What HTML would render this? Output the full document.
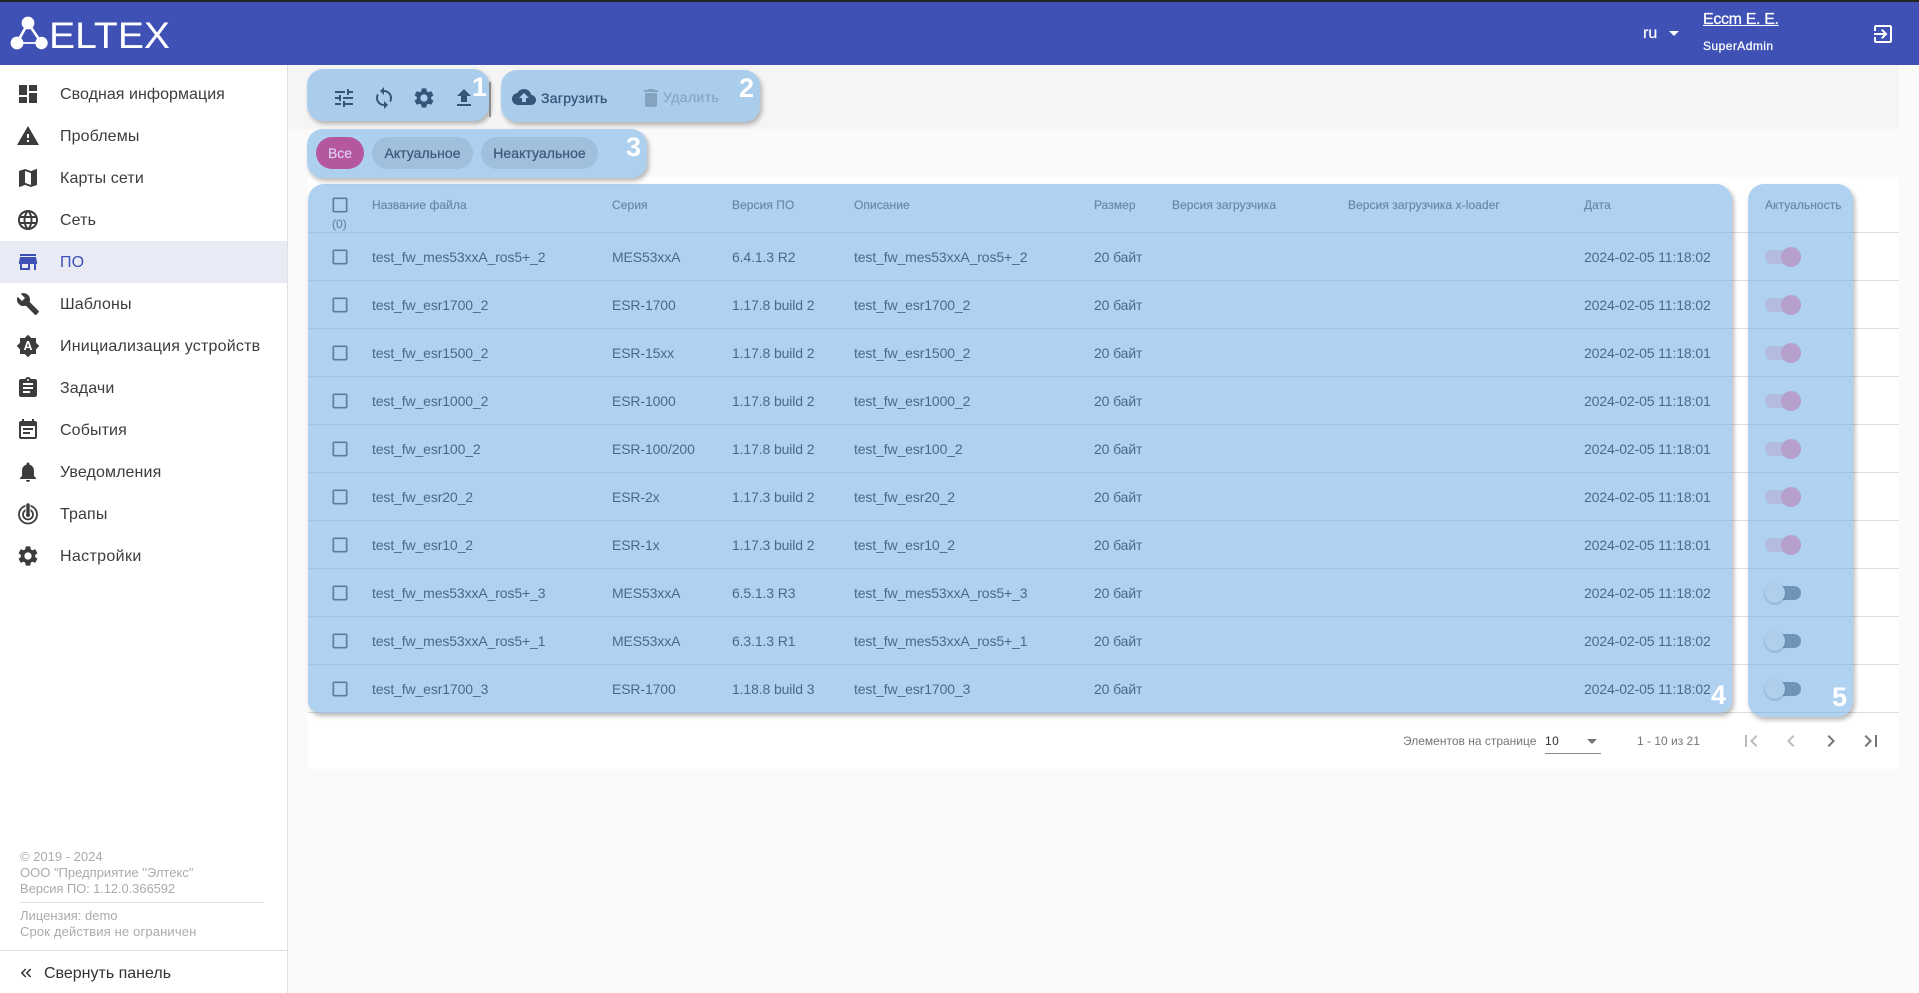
<!DOCTYPE html>
<html lang="ru"><head><meta charset="utf-8"><title>ELTEX</title>
<style>
*{box-sizing:border-box}
html,body{margin:0;padding:0}
body{width:1919px;height:993px;overflow:hidden;background:#fafafa;font-family:"Liberation Sans",sans-serif;color:#333;position:relative}
.a{position:absolute}
svg{display:block}
.t{position:absolute;white-space:nowrap}
#hd{left:0;top:0;width:1919px;height:65px;background:#3f51b5;border-top:2px solid #222}
#sb{left:0;top:65px;width:288px;height:928px;background:#fff;border-right:1px solid #e0e0e0}
.m{position:absolute;left:0;width:287px;height:42px}
.m svg{position:absolute;left:16px;top:9px;fill:#3c3c3c}
.m b{position:absolute;left:60px;top:1px;line-height:42px;font-weight:400;font-size:16px;color:#3c3c3c;letter-spacing:.12px;white-space:nowrap}
.ft{position:absolute;left:20px;font-size:13px;color:#ababab;white-space:nowrap;line-height:16px}
.r{position:absolute;left:308px;width:1591px;height:48px;border-bottom:1px solid #e0e0e0;font-size:14px;color:#2e2e2e;letter-spacing:-.12px}
.r span{position:absolute;top:1px;line-height:47px;white-space:nowrap}
.c1{left:64px}.c2{left:304px}.c3{left:424px}.c4{left:546px}.c5{left:786px}.c6{left:1276px}
.r svg{position:absolute;left:22px;top:14px;fill:#555}
.h{position:absolute;top:198px;font-size:12px;line-height:14px;color:#6f6f6f;white-space:nowrap;-webkit-text-stroke:.2px #6f6f6f;letter-spacing:.06px}
.ov{position:absolute;background:rgba(97,165,225,.5);box-shadow:2px 3px 5px rgba(0,0,0,.28)}
.p{position:absolute;background:#abcdec;box-shadow:2px 3px 5px rgba(0,0,0,.28);border-radius:16px}
.n{position:absolute;color:#fff;font-weight:700;font-size:27px;line-height:28px;z-index:5}
.tg{position:absolute;left:1765px;width:36px;height:14px;border-radius:7px;z-index:4}
.tg i{position:absolute;top:-3px;width:20px;height:20px;border-radius:50%}
.on{background:#b3bcdf}.on i{left:16px;background:#b5a0cc}
.of{background:#7093b8}.of i{left:0;background:#afcfec;box-shadow:0 1px 2px rgba(70,100,140,.45)}
.chip{position:absolute;top:137px;height:32px;border-radius:16px;line-height:32px;text-align:center;font-size:14px;z-index:4;letter-spacing:-.05px}
</style></head><body>

<div class="a" id="hd">
<svg class="a" style="left:0;top:-2px" width="180" height="65" viewBox="0 0 180 65">
<g fill="#fff"><circle cx="28" cy="23" r="6.4"/><circle cx="17" cy="43" r="6.4"/><circle cx="41.5" cy="43" r="6.2"/></g>
<path d="M28 23L17 43M28 23L41.5 43" stroke="#fff" stroke-width="2.6" fill="none"/>
<path d="M17 43H41.5" stroke="#fff" stroke-width="1.8" fill="none"/>
<text x="49" y="48" font-family="'Liberation Sans',sans-serif" font-size="37" fill="#fff" textLength="121" lengthAdjust="spacingAndGlyphs">ELTEX</text>
</svg>
<div class="t" style="left:1643px;top:22px;font-size:16px;line-height:20px;color:#fff;-webkit-text-stroke:.2px #fff">ru</div>
<svg class="a" style="left:1669px;top:29px" width="10" height="5"><path d="M0 0h10L5 5z" fill="#fff"/></svg>
<div class="t" style="left:1703px;top:8px;font-size:16px;line-height:20px;color:#fff;text-decoration:underline;-webkit-text-stroke:.25px #fff;letter-spacing:-.35px">Eccm E. E.</div>
<div class="t" style="left:1703px;top:37px;font-size:12px;line-height:15px;color:#fff;-webkit-text-stroke:.25px #fff;letter-spacing:.45px">SuperAdmin</div>
<svg class="a" style="left:1871px;top:20px" width="24" height="24" viewBox="0 0 24 24"><path fill="#fff" d="M10.09 15.59L11.5 17l5-5-5-5-1.41 1.41L12.67 11H3v2h9.67l-2.58 2.59zM19 3H5c-1.11 0-2 .9-2 2v4h2V5h14v14H5v-4H3v4c0 1.1.89 2 2 2h14c1.1 0 2-.9 2-2V5c0-1.1-.9-2-2-2z"/></svg>
</div>

<div class="a" id="sb">
<div class="m" style="top:8px"><svg width="24" height="24" viewBox="0 0 24 24"><path d="M3 13h8V3H3v10zm0 8h8v-6H3v6zm10 0h8V11h-8v10zm0-18v6h8V3h-8z"/></svg><b style="letter-spacing:.05px">Сводная информация</b></div>
<div class="m" style="top:50px"><svg width="24" height="24" viewBox="0 0 24 24"><path d="M1 21h22L12 2 1 21zm12-3h-2v-2h2v2zm0-4h-2v-4h2v4z"/></svg><b>Проблемы</b></div>
<div class="m" style="top:92px"><svg width="24" height="24" viewBox="0 0 24 24"><path d="M20.5 3l-.16.03L15 5.1 9 3 3.36 4.9c-.21.07-.36.25-.36.48V20.5c0 .28.22.5.5.5l.16-.03L9 18.9l6 2.1 5.64-1.9c.21-.07.36-.25.36-.48V3.5c0-.28-.22-.5-.5-.5zM15 19l-6-2.11V5l6 2.11V19z"/></svg><b>Карты сети</b></div>
<div class="m" style="top:134px"><svg width="24" height="24" viewBox="0 0 24 24"><path d="M11.99 2C6.47 2 2 6.48 2 12s4.47 10 9.99 10C17.52 22 22 17.52 22 12S17.52 2 11.99 2zm6.93 6h-2.95c-.32-1.25-.78-2.45-1.38-3.56 1.84.63 3.37 1.91 4.33 3.56zM12 4.04c.83 1.2 1.48 2.53 1.91 3.96h-3.82c.43-1.43 1.08-2.76 1.91-3.96zM4.26 14C4.1 13.36 4 12.69 4 12s.1-1.36.26-2h3.38c-.08.66-.14 1.32-.14 2 0 .68.06 1.34.14 2H4.26zm.82 2h2.95c.32 1.25.78 2.45 1.38 3.56-1.84-.63-3.37-1.9-4.33-3.56zm2.95-8H5.08c.96-1.66 2.49-2.93 4.33-3.56C8.81 5.55 8.35 6.75 8.03 8zM12 19.96c-.83-1.2-1.48-2.53-1.91-3.96h3.82c-.43 1.43-1.08 2.76-1.91 3.96zM14.34 14H9.66c-.09-.66-.16-1.32-.16-2 0-.68.07-1.35.16-2h4.68c.09.65.16 1.32.16 2 0 .68-.07 1.34-.16 2zm.25 5.56c.6-1.11 1.06-2.31 1.38-3.56h2.95c-.96 1.65-2.49 2.93-4.33 3.56zM16.36 14c.08-.66.14-1.32.14-2 0-.68-.06-1.34-.14-2h3.38c.16.64.26 1.31.26 2s-.1 1.36-.26 2h-3.38z"/></svg><b>Сеть</b></div>
<div class="m" style="top:176px;background:#e8ebf6"><svg width="24" height="24" viewBox="0 0 24 24" style="fill:#3f51b5"><path d="M20 4H4v2h16V4zm1 10v-2l-1-5H4l-1 5v2h1v6h10v-6h4v6h2v-6h1zm-9 4H6v-4h6v4z"/></svg><b style="color:#3f51b5">ПО</b></div>
<div class="m" style="top:218px"><svg width="24" height="24" viewBox="0 0 24 24"><path d="M22.7 19l-9.1-9.1c.9-2.3.4-5-1.5-6.9-2-2-5-2.4-7.4-1.3L9 6 6 9 1.6 4.7C.4 7.1.9 10.1 2.9 12.1c1.9 1.9 4.6 2.4 6.9 1.5l9.1 9.1c.4.4 1 .4 1.4 0l2.3-2.3c.5-.4.5-1.1.1-1.4z"/></svg><b>Шаблоны</b></div>
<div class="m" style="top:260px"><svg width="24" height="24" viewBox="0 0 24 24"><path d="M10.85 12.65h2.3L12 9l-1.15 3.65zM20 8.69V4h-4.69L12 .69 8.69 4H4v4.69L.69 12 4 15.31V20h4.69L12 23.31 15.31 20H20v-4.69L23.31 12 20 8.69zM14.3 16l-.7-2h-3.2l-.7 2H7.8L11 7h2l3.2 9h-1.9z"/></svg><b style="letter-spacing:.2px">Инициализация устройств</b></div>
<div class="m" style="top:302px"><svg width="24" height="24" viewBox="0 0 24 24"><path d="M19 3h-4.18C14.4 1.84 13.3 1 12 1c-1.3 0-2.4.84-2.82 2H5c-1.1 0-2 .9-2 2v14c0 1.1.9 2 2 2h14c1.1 0 2-.9 2-2V5c0-1.1-.9-2-2-2zm-7 0c.55 0 1 .45 1 1s-.45 1-1 1-1-.45-1-1 .45-1 1-1zm2 14H7v-2h7v2zm3-4H7v-2h10v2zm0-4H7V7h10v2z"/></svg><b>Задачи</b></div>
<div class="m" style="top:344px"><svg width="24" height="24" viewBox="0 0 24 24"><path d="M17 10H7v2h10v-2zm2-7h-1V1h-2v2H8V1H6v2H5c-1.11 0-1.99.9-1.99 2L3 19c0 1.1.89 2 2 2h14c1.1 0 2-.9 2-2V5c0-1.1-.9-2-2-2zm0 16H5V8h14v11zm-5-5H7v2h7v-2z"/></svg><b>События</b></div>
<div class="m" style="top:386px"><svg width="24" height="24" viewBox="0 0 24 24"><path d="M12 22c1.1 0 2-.9 2-2h-4c0 1.1.89 2 2 2zm6-6v-5c0-3.07-1.64-5.64-4.5-6.32V4c0-.83-.67-1.5-1.5-1.5s-1.5.67-1.5 1.5v.68C7.63 5.36 6 7.92 6 11v5l-2 2v1h16v-1l-2-2z"/></svg><b>Уведомления</b></div>
<div class="m" style="top:428px"><svg width="24" height="24" viewBox="0 0 24 24" style="fill:none"><circle cx="12" cy="12.5" r="9" stroke="#3c3c3c" stroke-width="1.8"/><circle cx="12" cy="12.5" r="5" stroke="#3c3c3c" stroke-width="1.8"/><circle cx="12" cy="13" r="2" fill="#3c3c3c"/><path d="M12 3v9" stroke="#fff" stroke-width="5"/><path d="M12 3v8" stroke="#3c3c3c" stroke-width="3.4" stroke-linecap="round"/></svg><b>Трапы</b></div>
<div class="m" style="top:470px"><svg width="24" height="24" viewBox="0 0 24 24"><path d="M19.14 12.94c.04-.3.06-.61.06-.94 0-.32-.02-.64-.07-.94l2.03-1.58c.18-.14.23-.41.12-.61l-1.92-3.32c-.12-.22-.37-.29-.59-.22l-2.39.96c-.5-.38-1.03-.7-1.62-.94l-.36-2.54c-.04-.24-.24-.41-.48-.41h-3.84c-.24 0-.43.17-.47.41l-.36 2.54c-.59.24-1.13.57-1.62.94l-2.39-.96c-.22-.08-.47 0-.59.22L2.74 8.87c-.12.21-.08.47.12.61l2.03 1.58c-.05.3-.09.63-.09.94s.02.64.07.94l-2.03 1.58c-.18.14-.23.41-.12.61l1.92 3.32c.12.22.37.29.59.22l2.39-.96c.5.38 1.03.7 1.62.94l.36 2.54c.05.24.24.41.48.41h3.84c.24 0 .44-.17.47-.41l.36-2.54c.59-.24 1.13-.56 1.62-.94l2.39.96c.22.08.47 0 .59-.22l1.92-3.32c.12-.22.07-.47-.12-.61l-2.01-1.58zM12 15.6c-1.98 0-3.6-1.62-3.6-3.6s1.62-3.6 3.6-3.6 3.6 1.62 3.6 3.6-1.62 3.6-3.6 3.6z"/></svg><b style="letter-spacing:.35px">Настройки</b></div>

<div class="ft" style="top:784px">© 2019 - 2024</div>
<div class="ft" style="top:800px">ООО "Предприятие "Элтекс"</div>
<div class="ft" style="top:816px;letter-spacing:-.1px">Версия ПО: 1.12.0.366592</div>
<div class="a" style="left:20px;top:837px;width:244px;height:1px;background:#e0e0e0"></div>
<div class="ft" style="top:843px">Лицензия: demo</div>
<div class="ft" style="top:859px;letter-spacing:.15px">Срок действия не ограничен</div>
<div class="a" style="left:0;top:885px;width:287px;height:1px;background:#e0e0e0"></div>
<svg class="a" style="left:17px;top:899px" width="18" height="18" viewBox="0 0 24 24"><path fill="#333" d="M17.59 18L19 16.59 14.42 12 19 7.41 17.59 6l-6 6zM11 18l1.41-1.41L7.83 12l4.58-4.59L11 6l-6 6z"/></svg>
<div class="t" style="left:44px;top:899px;font-size:16px;line-height:20px;color:#333">Свернуть панель</div>
</div>

<div class="a" style="left:288px;top:65px;width:1611px;height:64px;background:#f5f5f5"></div>
<div class="a" style="left:308px;top:177px;width:1591px;height:592px;background:#fff"></div>

<!-- table header -->
<div class="a" style="left:308px;top:232px;width:1591px;height:1px;background:#e0e0e0"></div>
<svg class="a" style="left:330px;top:195px;fill:#555" width="20" height="20" viewBox="0 0 24 24"><path d="M19 5v14H5V5h14m0-2H5c-1.1 0-2 .9-2 2v14c0 1.1.9 2 2 2h14c1.1 0 2-.9 2-2V5c0-1.1-.9-2-2-2z"/></svg>
<div class="h" style="left:332px;top:217px">(0)</div>
<div class="h" style="left:372px">Название файла</div>
<div class="h" style="left:612px">Серия</div>
<div class="h" style="left:732px">Версия ПО</div>
<div class="h" style="left:854px">Описание</div>
<div class="h" style="left:1094px">Размер</div>
<div class="h" style="left:1172px">Версия загрузчика</div>
<div class="h" style="left:1348px">Версия загрузчика x-loader</div>
<div class="h" style="left:1584px">Дата</div>
<div class="h" style="left:1765px">Актуальность</div>

<!-- rows -->
<div class="r" style="top:233px"><svg width="20" height="20" viewBox="0 0 24 24"><path d="M19 5v14H5V5h14m0-2H5c-1.1 0-2 .9-2 2v14c0 1.1.9 2 2 2h14c1.1 0 2-.9 2-2V5c0-1.1-.9-2-2-2z"/></svg><span class="c1">test_fw_mes53xxA_ros5+_2</span><span class="c2">MES53xxA</span><span class="c3">6.4.1.3 R2</span><span class="c4">test_fw_mes53xxA_ros5+_2</span><span class="c5">20 байт</span><span class="c6">2024-02-05 11:18:02</span></div>
<div class="r" style="top:281px"><svg width="20" height="20" viewBox="0 0 24 24"><path d="M19 5v14H5V5h14m0-2H5c-1.1 0-2 .9-2 2v14c0 1.1.9 2 2 2h14c1.1 0 2-.9 2-2V5c0-1.1-.9-2-2-2z"/></svg><span class="c1">test_fw_esr1700_2</span><span class="c2">ESR-1700</span><span class="c3">1.17.8 build 2</span><span class="c4">test_fw_esr1700_2</span><span class="c5">20 байт</span><span class="c6">2024-02-05 11:18:02</span></div>
<div class="r" style="top:329px"><svg width="20" height="20" viewBox="0 0 24 24"><path d="M19 5v14H5V5h14m0-2H5c-1.1 0-2 .9-2 2v14c0 1.1.9 2 2 2h14c1.1 0 2-.9 2-2V5c0-1.1-.9-2-2-2z"/></svg><span class="c1">test_fw_esr1500_2</span><span class="c2">ESR-15xx</span><span class="c3">1.17.8 build 2</span><span class="c4">test_fw_esr1500_2</span><span class="c5">20 байт</span><span class="c6">2024-02-05 11:18:01</span></div>
<div class="r" style="top:377px"><svg width="20" height="20" viewBox="0 0 24 24"><path d="M19 5v14H5V5h14m0-2H5c-1.1 0-2 .9-2 2v14c0 1.1.9 2 2 2h14c1.1 0 2-.9 2-2V5c0-1.1-.9-2-2-2z"/></svg><span class="c1">test_fw_esr1000_2</span><span class="c2">ESR-1000</span><span class="c3">1.17.8 build 2</span><span class="c4">test_fw_esr1000_2</span><span class="c5">20 байт</span><span class="c6">2024-02-05 11:18:01</span></div>
<div class="r" style="top:425px"><svg width="20" height="20" viewBox="0 0 24 24"><path d="M19 5v14H5V5h14m0-2H5c-1.1 0-2 .9-2 2v14c0 1.1.9 2 2 2h14c1.1 0 2-.9 2-2V5c0-1.1-.9-2-2-2z"/></svg><span class="c1">test_fw_esr100_2</span><span class="c2">ESR-100/200</span><span class="c3">1.17.8 build 2</span><span class="c4">test_fw_esr100_2</span><span class="c5">20 байт</span><span class="c6">2024-02-05 11:18:01</span></div>
<div class="r" style="top:473px"><svg width="20" height="20" viewBox="0 0 24 24"><path d="M19 5v14H5V5h14m0-2H5c-1.1 0-2 .9-2 2v14c0 1.1.9 2 2 2h14c1.1 0 2-.9 2-2V5c0-1.1-.9-2-2-2z"/></svg><span class="c1">test_fw_esr20_2</span><span class="c2">ESR-2x</span><span class="c3">1.17.3 build 2</span><span class="c4">test_fw_esr20_2</span><span class="c5">20 байт</span><span class="c6">2024-02-05 11:18:01</span></div>
<div class="r" style="top:521px"><svg width="20" height="20" viewBox="0 0 24 24"><path d="M19 5v14H5V5h14m0-2H5c-1.1 0-2 .9-2 2v14c0 1.1.9 2 2 2h14c1.1 0 2-.9 2-2V5c0-1.1-.9-2-2-2z"/></svg><span class="c1">test_fw_esr10_2</span><span class="c2">ESR-1x</span><span class="c3">1.17.3 build 2</span><span class="c4">test_fw_esr10_2</span><span class="c5">20 байт</span><span class="c6">2024-02-05 11:18:01</span></div>
<div class="r" style="top:569px"><svg width="20" height="20" viewBox="0 0 24 24"><path d="M19 5v14H5V5h14m0-2H5c-1.1 0-2 .9-2 2v14c0 1.1.9 2 2 2h14c1.1 0 2-.9 2-2V5c0-1.1-.9-2-2-2z"/></svg><span class="c1">test_fw_mes53xxA_ros5+_3</span><span class="c2">MES53xxA</span><span class="c3">6.5.1.3 R3</span><span class="c4">test_fw_mes53xxA_ros5+_3</span><span class="c5">20 байт</span><span class="c6">2024-02-05 11:18:02</span></div>
<div class="r" style="top:617px"><svg width="20" height="20" viewBox="0 0 24 24"><path d="M19 5v14H5V5h14m0-2H5c-1.1 0-2 .9-2 2v14c0 1.1.9 2 2 2h14c1.1 0 2-.9 2-2V5c0-1.1-.9-2-2-2z"/></svg><span class="c1">test_fw_mes53xxA_ros5+_1</span><span class="c2">MES53xxA</span><span class="c3">6.3.1.3 R1</span><span class="c4">test_fw_mes53xxA_ros5+_1</span><span class="c5">20 байт</span><span class="c6">2024-02-05 11:18:02</span></div>
<div class="r" style="top:665px"><svg width="20" height="20" viewBox="0 0 24 24"><path d="M19 5v14H5V5h14m0-2H5c-1.1 0-2 .9-2 2v14c0 1.1.9 2 2 2h14c1.1 0 2-.9 2-2V5c0-1.1-.9-2-2-2z"/></svg><span class="c1">test_fw_esr1700_3</span><span class="c2">ESR-1700</span><span class="c3">1.18.8 build 3</span><span class="c4">test_fw_esr1700_3</span><span class="c5">20 байт</span><span class="c6">2024-02-05 11:18:02</span></div>

<!-- pagination -->
<div class="t" style="left:1403px;top:734px;font-size:12px;line-height:15px;color:#757575">Элементов на странице</div>
<div class="t" style="left:1545px;top:734px;font-size:12px;line-height:15px;color:#333;letter-spacing:.5px">10</div>
<svg class="a" style="left:1587px;top:739px" width="10" height="5"><path d="M0 0h10L5 5z" fill="#757575"/></svg>
<div class="a" style="left:1545px;top:753px;width:56px;height:1px;background:#8a8a8a"></div>
<div class="t" style="left:1637px;top:734px;font-size:12px;line-height:15px;color:#757575">1 - 10 из 21</div>
<svg class="a" style="left:1739px;top:729px" width="24" height="24" viewBox="0 0 24 24"><path fill="#bdbdbd" d="M18.41 16.59L13.82 12l4.59-4.59L17 6l-6 6 6 6zM6 6h2v12H6z"/></svg>
<svg class="a" style="left:1779px;top:729px" width="24" height="24" viewBox="0 0 24 24"><path fill="#bdbdbd" d="M15.41 7.41L14 6l-6 6 6 6 1.41-1.41L10.83 12z"/></svg>
<svg class="a" style="left:1819px;top:729px" width="24" height="24" viewBox="0 0 24 24"><path fill="#757575" d="M10 6L8.59 7.41 13.17 12l-4.58 4.59L10 18l6-6z"/></svg>
<svg class="a" style="left:1859px;top:729px" width="24" height="24" viewBox="0 0 24 24"><path fill="#757575" d="M5.59 7.41L10.18 12l-4.59 4.59L7 18l6-6-6-6zM16 6h2v12h-2z"/></svg>

<!-- overlays -->
<div class="ov" style="left:308px;top:184px;width:1424px;height:529px;border-radius:16px 16px 12px 12px"></div>
<div class="ov" style="left:1748px;top:184px;width:105px;height:533px;border-radius:16px"></div>

<!-- toggles -->
<div class="tg on" style="top:250px"><i></i></div>
<div class="tg on" style="top:298px"><i></i></div>
<div class="tg on" style="top:346px"><i></i></div>
<div class="tg on" style="top:394px"><i></i></div>
<div class="tg on" style="top:442px"><i></i></div>
<div class="tg on" style="top:490px"><i></i></div>
<div class="tg on" style="top:538px"><i></i></div>
<div class="tg of" style="top:586px"><i></i></div>
<div class="tg of" style="top:634px"><i></i></div>
<div class="tg of" style="top:682px"><i></i></div>

<!-- annotation panels -->
<div class="p" style="left:307px;top:69px;width:182px;height:52px"></div>
<div class="a" style="left:489px;top:82px;width:2px;height:35px;background:#8a8a8a;z-index:3"></div>
<div class="p" style="left:501px;top:70px;width:259px;height:52px"></div>
<div class="p" style="left:307px;top:129px;width:340px;height:49px;background:#aed0ef"></div>

<svg class="a" style="left:332px;top:86px;z-index:4;fill:#34567a" width="24" height="24" viewBox="0 0 24 24"><path d="M3 17v2h6v-2H3zM3 5v2h10V5H3zm10 16v-2h8v-2h-8v-2h-2v6h2zM7 9v2H3v2h4v2h2V9H7zm14 4v-2H11v2h10zm-6-4h2V7h4V5h-4V3h-2v6z"/></svg>
<svg class="a" style="left:372px;top:86px;z-index:4;fill:#34567a" width="24" height="24" viewBox="0 0 24 24"><path d="M12 4V1L8 5l4 4V6c3.31 0 6 2.69 6 6 0 1.01-.25 1.97-.7 2.8l1.46 1.46C19.54 15.03 20 13.57 20 12c0-4.42-3.58-8-8-8zm0 14c-3.31 0-6-2.69-6-6 0-1.01.25-1.97.7-2.8L5.24 7.74C4.46 8.97 4 10.43 4 12c0 4.42 3.58 8 8 8v3l4-4-4-4v3z"/></svg>
<svg class="a" style="left:412px;top:86px;z-index:4;fill:#34567a" width="24" height="24" viewBox="0 0 24 24"><path d="M19.14 12.94c.04-.3.06-.61.06-.94 0-.32-.02-.64-.07-.94l2.03-1.58c.18-.14.23-.41.12-.61l-1.92-3.32c-.12-.22-.37-.29-.59-.22l-2.39.96c-.5-.38-1.03-.7-1.62-.94l-.36-2.54c-.04-.24-.24-.41-.48-.41h-3.84c-.24 0-.43.17-.47.41l-.36 2.54c-.59.24-1.13.57-1.62.94l-2.39-.96c-.22-.08-.47 0-.59.22L2.74 8.87c-.12.21-.08.47.12.61l2.03 1.58c-.05.3-.09.63-.09.94s.02.64.07.94l-2.03 1.58c-.18.14-.23.41-.12.61l1.92 3.32c.12.22.37.29.59.22l2.39-.96c.5.38 1.03.7 1.62.94l.36 2.54c.05.24.24.41.48.41h3.84c.24 0 .44-.17.47-.41l.36-2.54c.59-.24 1.13-.56 1.62-.94l2.39.96c.22.08.47 0 .59-.22l1.92-3.32c.12-.22.07-.47-.12-.61l-2.01-1.58zM12 15.6c-1.98 0-3.6-1.62-3.6-3.6s1.62-3.6 3.6-3.6 3.6 1.62 3.6 3.6-1.62 3.6-3.6 3.6z"/></svg>
<svg class="a" style="left:452px;top:86px;z-index:4;fill:#34567a" width="24" height="24" viewBox="0 0 24 24"><path d="M9 16h6v-6h4l-7-7-7 7h4v6zm-4 2h14v2H5z"/></svg>
<svg class="a" style="left:512px;top:85px;z-index:4;fill:#34567a" width="24" height="24" viewBox="0 0 24 24"><path d="M19.35 10.04C18.67 6.59 15.64 4 12 4 9.11 4 6.6 5.64 5.35 8.04 2.34 8.36 0 10.91 0 14c0 3.31 2.69 6 6 6h13c2.76 0 5-2.24 5-5 0-2.64-2.05-4.78-4.65-4.96zM14 13v4h-4v-4H7l5-5 5 5h-3z"/></svg>
<div class="t" style="left:541px;top:90px;font-size:14px;line-height:17px;color:#34567a;z-index:4;-webkit-text-stroke:.3px #34567a;letter-spacing:.3px">Загрузить</div>
<svg class="a" style="left:639px;top:86px;z-index:4;fill:#84a3bf" width="24" height="24" viewBox="0 0 24 24"><path d="M6 19c0 1.1.9 2 2 2h8c1.1 0 2-.9 2-2V7H6v12zM19 4h-3.5l-1-1h-5l-1 1H5v2h14V4z"/></svg>
<div class="t" style="left:663px;top:89px;font-size:14px;line-height:17px;color:#89a8c4;z-index:4;-webkit-text-stroke:.3px #89a8c4;letter-spacing:.4px">Удалить</div>

<div class="chip" style="left:316px;width:48px;background:#b5579f;color:#dccdf0;-webkit-text-stroke:.2px #dccdf0">Все</div>
<div class="chip" style="left:372px;width:101px;background:#9fbfdc;color:#3c5a7a;-webkit-text-stroke:.25px #3c5a7a;letter-spacing:.05px">Актуальное</div>
<div class="chip" style="left:481px;width:117px;background:#9fbfdc;color:#3c5a7a;-webkit-text-stroke:.25px #3c5a7a;letter-spacing:.05px">Неактуальное</div>

<div class="n" style="left:472px;top:73px">1</div>
<div class="n" style="left:739px;top:74px">2</div>
<div class="n" style="left:626px;top:133px">3</div>
<div class="n" style="left:1711px;top:681px">4</div>
<div class="n" style="left:1832px;top:683px">5</div>
</body></html>
